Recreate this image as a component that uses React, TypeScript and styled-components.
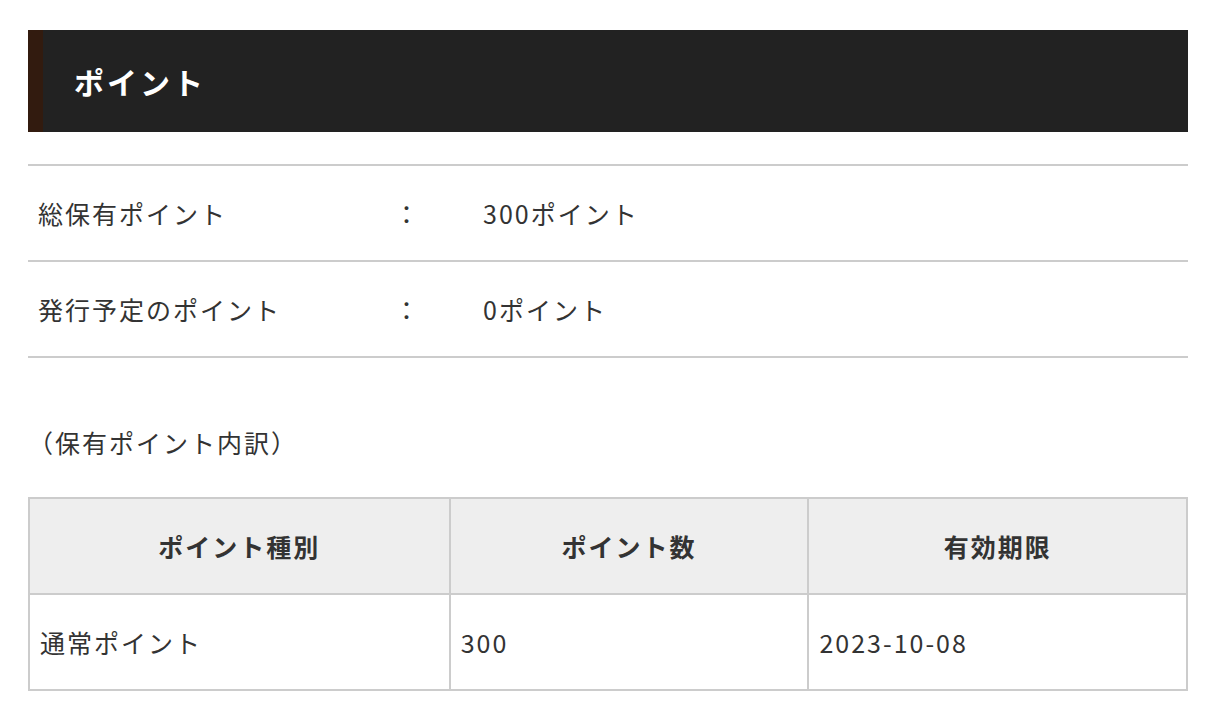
import React from 'react';
import styled, { createGlobalStyle } from 'styled-components';

const GlobalStyle = createGlobalStyle`
    body {
        margin: 0;
        background: #fff;
        font-family: "Noto Sans CJK JP", "Noto Sans", sans-serif;
        color: #333;
    }
`;

const Page = styled.div`
    width: 1160px;
    padding: 30px 20px 30px 28px;
`;

const Heading = styled.h2`
    margin: 0;
    height: 102px;
    display: flex;
    align-items: center;
    box-sizing: border-box;
    padding-left: 31px;
    background: #222;
    border-left: 15px solid #321b0f;
    color: #fff;
    font-size: 30px;
    font-weight: 700;
    letter-spacing: 3px;
`;

const InfoList = styled.dl`
    margin: 32px 0 0;
    border-top: 2px solid #ccc;
`;

const InfoRow = styled.div`
    display: grid;
    grid-template-columns: 356px 89px 1fr;
    align-items: center;
    padding: 29px 10px;
    line-height: 36px;
    font-size: 25px;
    letter-spacing: 2px;
    border-bottom: 2px solid #ccc;
`;

const Label = styled.dt`
    margin: 0;
`;

const Colon = styled.span``;

const Value = styled.dd`
    margin: 0;
`;

const Caption = styled.p`
    margin: 66px 0 37px;
    font-size: 25px;
    line-height: 36px;
    letter-spacing: 2px;
`;

const Table = styled.table`
    width: 100%;
    border-collapse: collapse;
    table-layout: fixed;
    font-size: 25px;
    letter-spacing: 2px;
    border: 2px solid #ccc;
`;

const Th = styled.th<{ $width: string }>`
    width: ${(p) => p.$width};
    height: 94px;
    padding: 0 10px;
    background: #eee;
    border: 2px solid #ccc;
    font-weight: 700;
    text-align: center;
    line-height: 36px;
`;

const Td = styled.td`
    height: 94px;
    padding: 0 10px;
    border: 2px solid #ccc;
    text-align: left;
    line-height: 36px;
`;

const rows = [
    { label: '総保有ポイント', value: '300ポイント' },
    { label: '発行予定のポイント', value: '0ポイント' },
];

const App: React.FC = () => {
    return (
        <>
            <GlobalStyle />
            <Page>
                <Heading>ポイント</Heading>

                {/* 合計 */}
                <InfoList>
                    {rows.map((r) => (
                        <InfoRow key={r.label}>
                            <Label>{r.label}</Label>
                            <Colon>：</Colon>
                            <Value>{r.value}</Value>
                        </InfoRow>
                    ))}
                </InfoList>

                <Caption>（保有ポイント内訳）</Caption>

                <Table>
                    <thead>
                        <tr>
                            <Th $width="36.5%">ポイント種別</Th>
                            <Th $width="30.85%">ポイント数</Th>
                            <Th $width="32.65%">有効期限</Th>
                        </tr>
                    </thead>
                    <tbody>
                        <tr>
                            <Td>通常ポイント</Td>
                            <Td>300</Td>
                            <Td>2023-10-08</Td>
                        </tr>
                    </tbody>
                </Table>
            </Page>
        </>
    );
};

export default App;
